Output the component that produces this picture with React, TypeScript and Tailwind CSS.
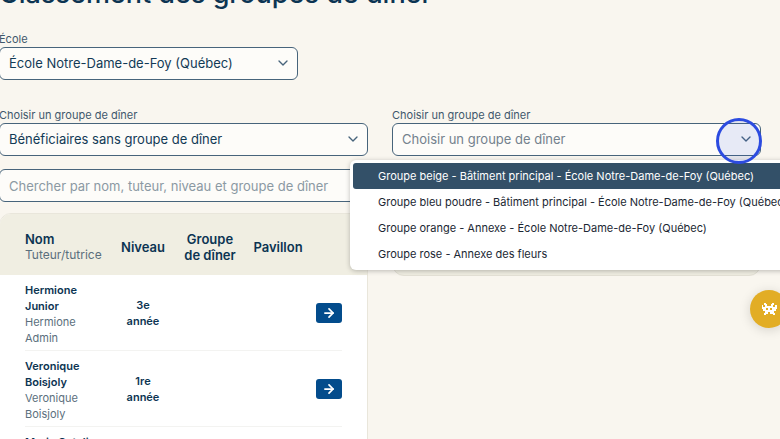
import { ArrowRight, ChevronDown } from 'lucide-react';

const GROUPS = [
  'Groupe beige - Bâtiment principal - École Notre-Dame-de-Foy (Québec)',
  'Groupe bleu poudre - Bâtiment principal - École Notre-Dame-de-Foy (Québec)',
  'Groupe orange - Annexe - École Notre-Dame-de-Foy (Québec)',
  'Groupe rose - Annexe des fleurs',
];

const STUDENTS = [
  { first: 'Hermione', last: 'Junior', tutorFirst: 'Hermione', tutorLast: 'Admin', level: '3e', group: '', pavilion: '' },
  { first: 'Veronique', last: 'Boisjoly', tutorFirst: 'Veronique', tutorLast: 'Boisjoly', level: '1re', group: '', pavilion: '' },
  { first: 'Marie Catali', last: 'Junior', tutorFirst: 'Marie', tutorLast: 'Admin', level: '2e', group: '', pavilion: '' },
];

type SelectFieldProps = {
  id: string;
  label: string;
  value: string;
  muted?: boolean;
};

function SelectField({ id, label, value, muted = false }: SelectFieldProps) {
  return (
    <div>
      <label htmlFor={id} className="block text-[11px] leading-4 text-[#3f586c]">{label}</label>
      <div className="relative">
        <select
          id={id}
          className={`block h-[33px] w-full appearance-none rounded-md border border-[#47647b] bg-[#fdfcf9] pr-8 pl-[9px] text-[13px] ${
            muted ? 'text-[#73818d]' : 'text-[#123a56]'
          }`}
        >
          <option>{value}</option>
        </select>
        <ChevronDown className="pointer-events-none absolute top-2 right-[7px] size-4 text-[#47647b]" strokeWidth={2} />
      </div>
    </div>
  );
}

function StudentTable() {
  return (
    <div className="mt-[11px] overflow-hidden rounded-t-xl border border-[#e9e6db] bg-white">
      <table className="w-full table-fixed border-separate border-spacing-0 text-[#0c3452]">
        <colgroup>
          <col className="w-[25px]" />
          <col className="w-[85px]" />
          <col className="w-[66px]" />
          <col className="w-[68px]" />
          <col className="w-[68px]" />
          <col />
          <col className="w-[25px]" />
        </colgroup>
        <thead className="bg-[#f0eee2]">
          <tr className="h-[61px] text-[13px] leading-4">
            <td />
            <th scope="col" className="pt-1 text-left font-semibold whitespace-nowrap">
              Nom
              <span className="block text-xs leading-4 font-normal text-[#5b6f7d]">Tuteur/tutrice</span>
            </th>
            <th scope="col" className="pt-1 font-semibold">Niveau</th>
            <th scope="col" className="pt-1 font-semibold">Groupe<br />de dîner</th>
            <th scope="col" className="pt-1 font-semibold">Pavillon</th>
            <td />
            <td />
          </tr>
        </thead>
        <tbody>
          {STUDENTS.map((student) => (
            <tr key={student.first} className="text-[11px] leading-4">
              <td />
              <td className="border-b border-[#f3f3f1] pt-[7px] pb-1">
                <div className="font-semibold whitespace-nowrap">{student.first}<br />{student.last}</div>
                <div className="text-[#5b6f7d]">{student.tutorFirst}<br />{student.tutorLast}</div>
              </td>
              <td className="border-b border-[#f3f3f1] text-center font-semibold">{student.level}<br />année</td>
              <td className="border-b border-[#f3f3f1]">{student.group}</td>
              <td className="border-b border-[#f3f3f1]">{student.pavilion}</td>
              <td className="border-b border-[#f3f3f1]">
                <button
                  type="button"
                  aria-label={`Ajouter ${student.first} ${student.last}`}
                  className="ml-auto flex h-5 w-[26px] items-center justify-center rounded-[3px] bg-[#034c8c] text-white"
                >
                  <ArrowRight className="size-[14px]" strokeWidth={3} />
                </button>
              </td>
              <td />
            </tr>
          ))}
        </tbody>
      </table>
    </div>
  );
}

function GroupMenu() {
  return (
    <ul
      role="listbox"
      aria-label="Groupes de dîner"
      className="absolute top-[37px] -left-[42px] z-10 w-[480px] rounded-md bg-white p-[3px] text-[11px] text-[#1b2733] shadow-[0_1px_5px_rgba(0,0,0,0.25)]"
    >
      {GROUPS.map((group, index) => (
        <li
          key={group}
          role="option"
          aria-selected={index === 0}
          className={`flex h-[26px] items-center rounded-[3px] pl-[25px] whitespace-nowrap ${
            index === 0 ? 'bg-[#335068] text-white' : ''
          }`}
        >
          {group}
        </li>
      ))}
    </ul>
  );
}

function HelpButton() {
  return (
    <button
      type="button"
      aria-label="Aide"
      className="absolute top-[290px] -right-2 flex size-[38px] items-center justify-center rounded-full bg-[#e2ad25] text-white shadow-[0_2px_12px_rgba(0,0,0,0.15)]"
    >
      <svg viewBox="0 0 16 12" className="h-3 w-4" fill="currentColor" aria-hidden="true">
        <path
          fillRule="evenodd"
          d="M3 0h2v1h1v2h4V1h1V0h2v2h-1v2h2V2h2v4h-1v2h-2v2h1v2h-2v-1H9V9H7v2H5v1H3v-2h1V8H2V6H1V2h1v2h2V2H3zM5 5v2h2V5zM9 5v2h2V5z"
        />
      </svg>
    </button>
  );
}

export default function App() {
  return (
    <div className="relative h-screen overflow-hidden bg-[#f9f6ef] font-['Inter','Liberation_Sans',sans-serif]">
      <main className="-mt-[22px] -ml-px pr-[19px]">
        <h1 className="text-[27px] leading-8 font-medium whitespace-nowrap text-[#0c3452]">
          Classement des groupes de dîner
        </h1>

        <div className="mt-[21px] w-[299px]">
          <SelectField id="ecole" label="École" value="École Notre-Dame-de-Foy (Québec)" />
        </div>

        <div className="mt-[27px] grid grid-cols-2 items-start gap-6">
          <section>
            <SelectField id="source" label="Choisir un groupe de dîner" value="Bénéficiaires sans groupe de dîner" />
            <input
              type="search"
              aria-label="Chercher par nom, tuteur, niveau et groupe de dîner"
              placeholder="Chercher par nom, tuteur, niveau et groupe de dîner"
              className="mt-[13px] block h-[33px] w-full rounded-md border border-[#47647b] bg-[#fdfcf9] px-[9px] text-[13px] placeholder:text-[#8b99a3]"
            />
            <StudentTable />
          </section>

          <section>
            <div className="relative">
              <SelectField id="cible" label="Choisir un groupe de dîner" value="Choisir un groupe de dîner" muted />
              <span className="pointer-events-none absolute top-[11px] -right-px z-20 size-[46px] rounded-full border-[3px] border-[#2c4be0] bg-[#2c4be0]/10" />
              <div className="relative">
                <div className="absolute inset-x-0 -top-[33px]">
                  <GroupMenu />
                </div>
              </div>
            </div>
            <div className="mt-[57px] h-[63px] rounded-xl border border-[#e4e1d6] bg-[#f0eee2]" />
          </section>
        </div>
      </main>
      <HelpButton />
    </div>
  );
}
